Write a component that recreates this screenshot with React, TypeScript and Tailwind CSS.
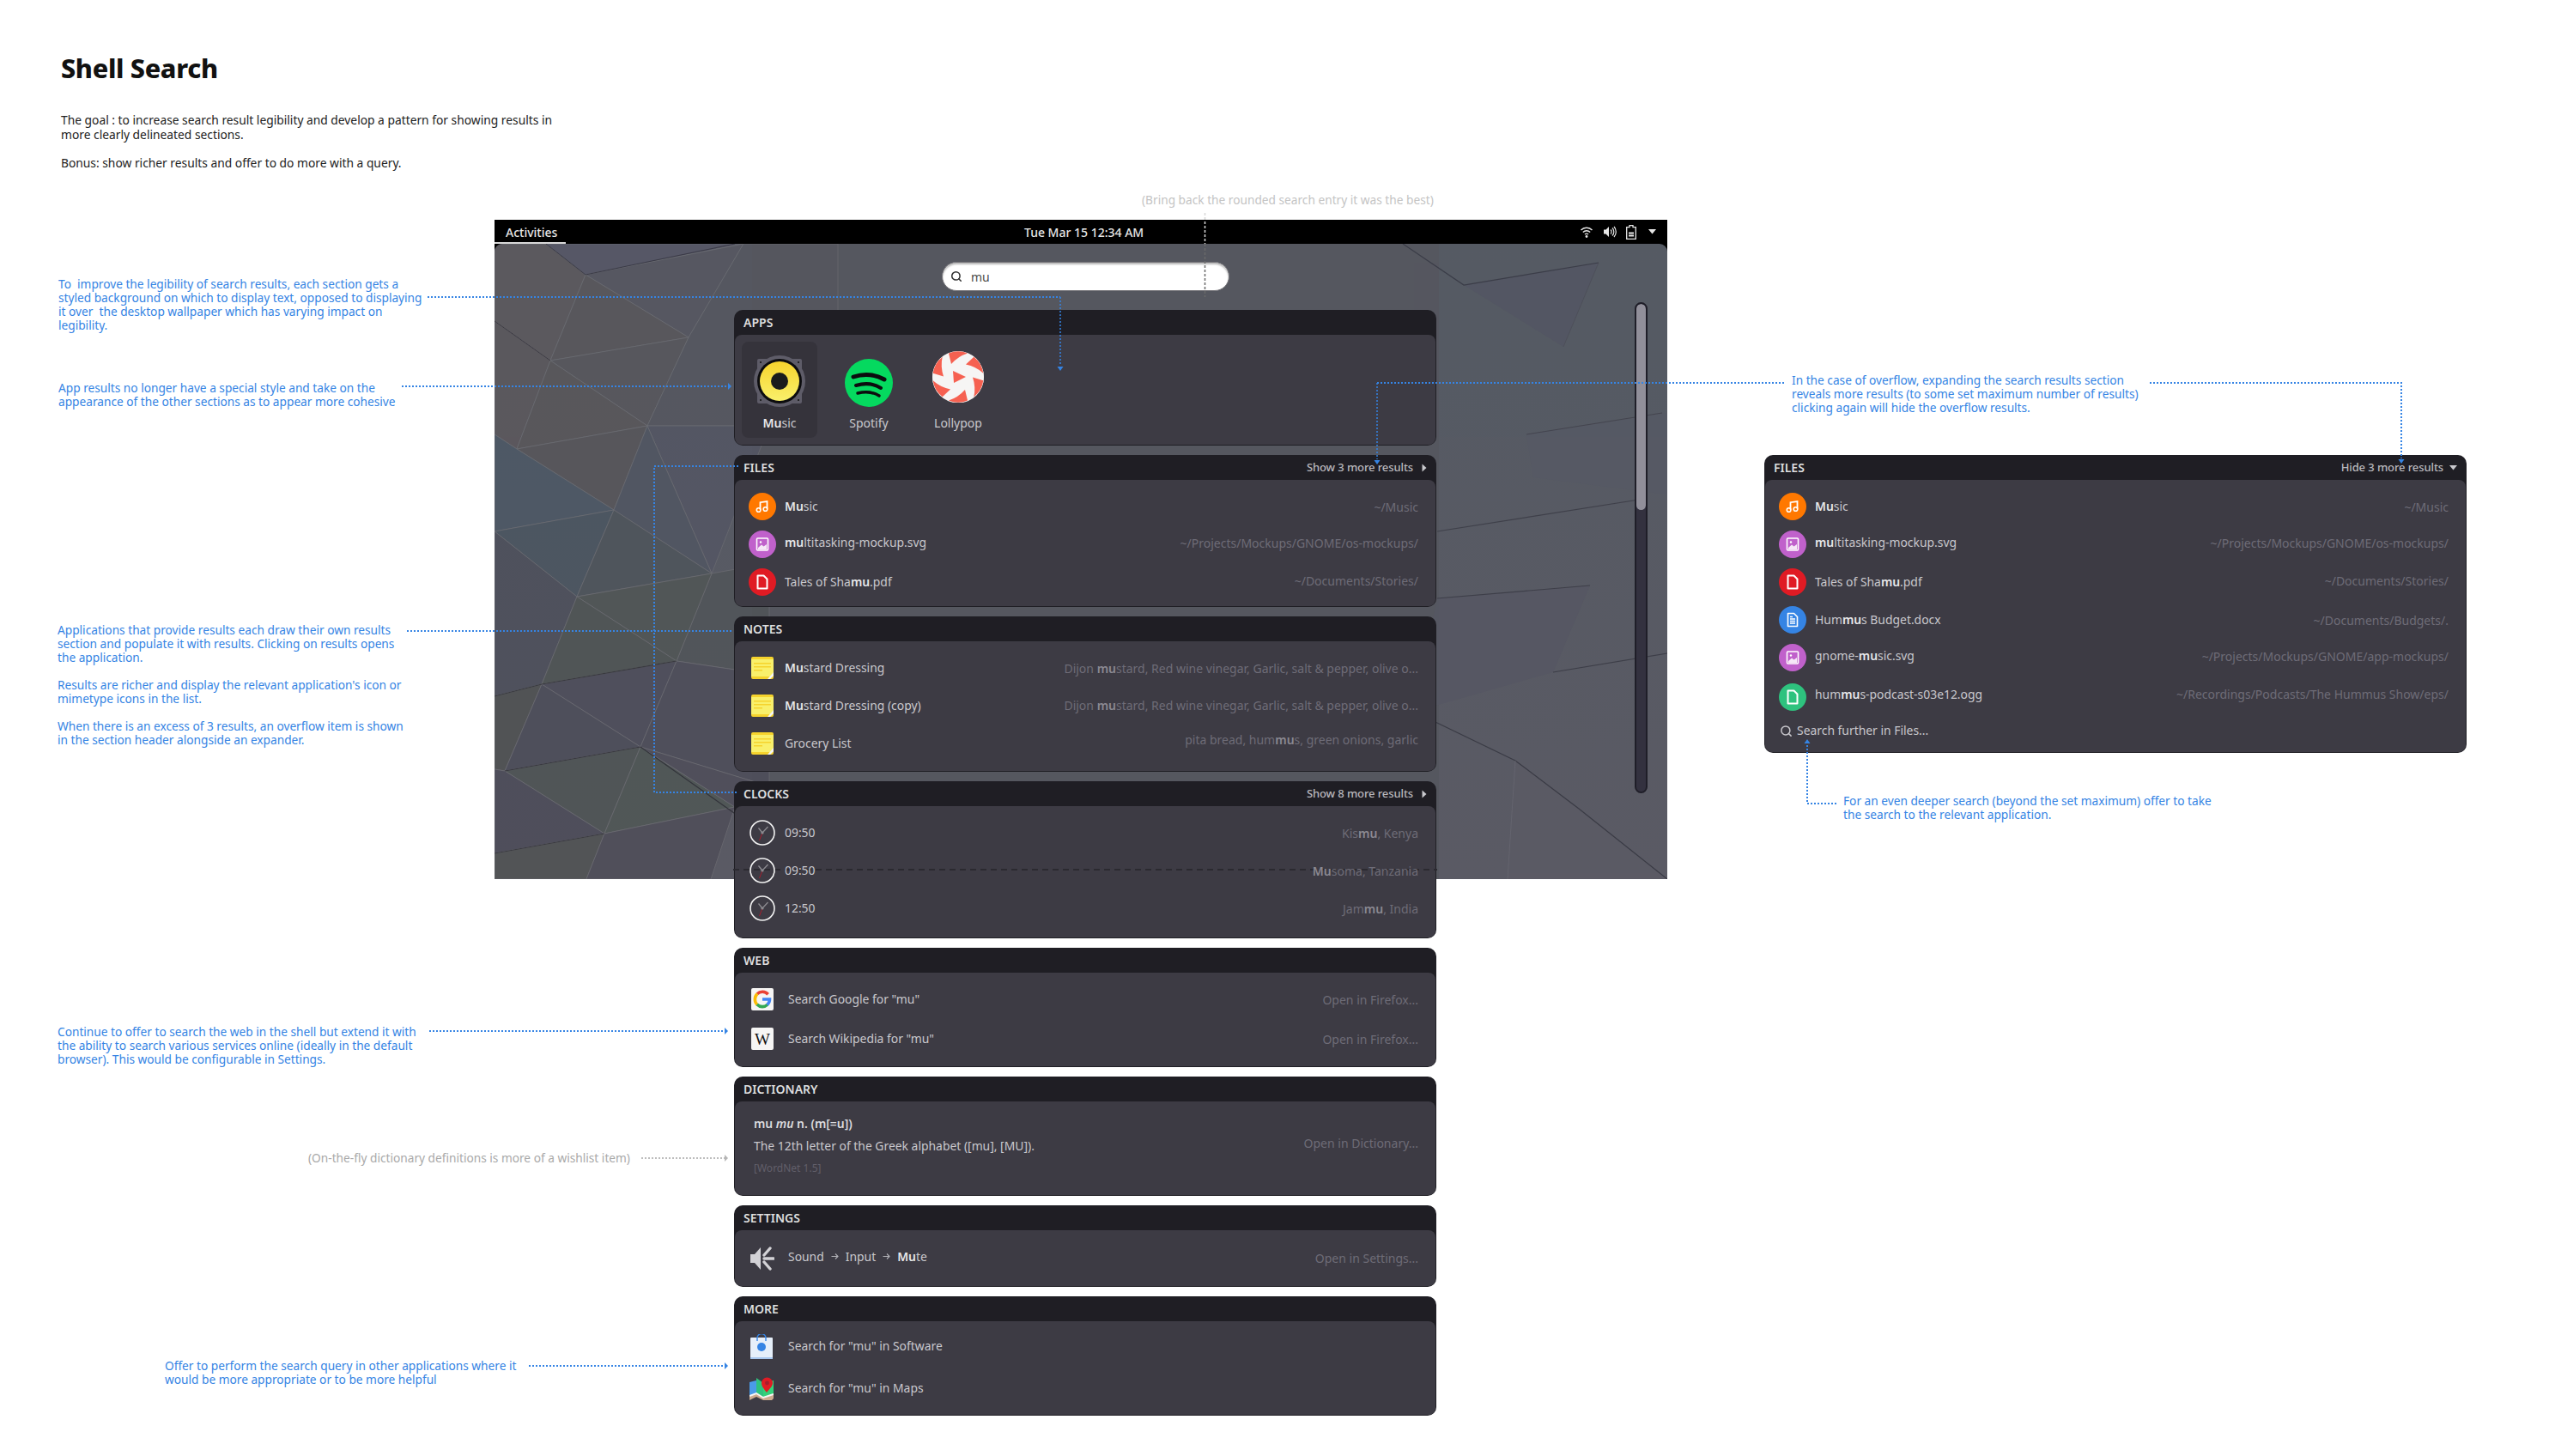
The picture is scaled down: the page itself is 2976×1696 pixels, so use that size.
import React from 'react';
import { Search } from 'lucide-react';

// **Mu**stard style highlights: the odd chunks are the matched part
function Hl({ t, strong }: { t: string; strong: string }) {
  const parts = t.split('*');
  return (
    <>
      {parts.map((p, i) =>
        i % 2 ? (
          <span key={i} className={`font-semibold ${strong}`}>
            {p}
          </span>
        ) : (
          <span key={i}>{p}</span>
        ),
      )}
    </>
  );
}

function Section({
  title,
  extra,
  bodyClass,
  children,
}: {
  title: string;
  extra?: React.ReactNode;
  bodyClass: string;
  children: React.ReactNode;
}) {
  return (
    <section className="rounded-[10px] bg-[#1f1e24] px-px pb-px">
      <div className="flex h-[29px] items-center pl-[10px] pr-[10px]">
        <span className="text-[14px] font-semibold text-[#dededf]">{title}</span>
        {extra}
      </div>
      <div className={`rounded-[8px] bg-[#3d3b44] ${bodyClass}`}>{children}</div>
    </section>
  );
}

function More({ label }: { label: string }) {
  return (
    <div className="ml-auto flex items-center">
      <span className="text-[13px] font-medium tracking-[-0.1px] text-[#b9b8bd]">{label}</span>
      <svg width="6" height="10" viewBox="0 0 6 10" className="ml-[10px]">
        <path d="M0.5 0.5 L5.5 5 L0.5 9.5Z" fill="#c8c8cc" />
      </svg>
    </div>
  );
}

function Row({
  icon,
  name,
  right,
  rowClass = 'h-[44px]',
  textClass = 'ml-[10px]',
  rightClass = '',
}: {
  icon: React.ReactNode;
  name: string;
  right?: string;
  rowClass?: string;
  textClass?: string;
  rightClass?: string;
}) {
  return (
    <div className={`flex items-center pl-[16px] pr-[20px] ${rowClass}`}>
      <div className="flex w-[32px] shrink-0 justify-center">{icon}</div>
      <span className={`whitespace-nowrap text-[13.900px] text-[#c9c8cd] ${textClass}`}>
        <Hl t={name} strong="text-[#e8e8ea]" />
      </span>
      {right && (
        <span className={`ml-auto whitespace-nowrap text-[14px] text-[#6e6c77] ${rightClass}`}>
          <Hl t={right} strong="text-[#8b8992]" />
        </span>
      )}
    </div>
  );
}

/* ---------- icons ---------- */

function MimeCircle({ bg, children }: { bg: string; children: React.ReactNode }) {
  return (
    <div className={`flex h-[32px] w-[32px] items-center justify-center rounded-full ${bg}`}>
      <svg width="18" height="18" viewBox="0 0 18 18" fill="none">
        {children}
      </svg>
    </div>
  );
}

const MusicMime = () => (
  <MimeCircle bg="bg-[#ff7800]">
    <path d="M6.500 12.500V4.200l8-1.200v8.500" stroke="#fff" strokeWidth="1.800" />
    <circle cx="4.600" cy="13" r="2.300" stroke="#fff" strokeWidth="1.600" />
    <circle cx="12.500" cy="12" r="2.300" stroke="#fff" strokeWidth="1.600" />
  </MimeCircle>
);
const ImageMime = () => (
  <MimeCircle bg="bg-[#c061cb]">
    <rect x="2.500" y="2" width="13" height="14" rx="1" stroke="#fff" strokeWidth="1.600" />
    <path d="M4 13l4-3.500 2.500 2 3.500-2.500V15H4z" fill="#fff" opacity="0.85" />
    <circle cx="7" cy="6.500" r="1.200" fill="#fff" />
  </MimeCircle>
);
const DocMime = ({ bg }: { bg: string }) => (
  <MimeCircle bg={bg}>
    <path d="M3.500 1.500h7l4 4v11h-11z" stroke="#fff" strokeWidth="2" strokeLinejoin="round" />
  </MimeCircle>
);
const TextMime = () => (
  <MimeCircle bg="bg-[#3584e4]">
    <path d="M3.500 1.500h7l4 4v11h-11z" stroke="#fff" strokeWidth="1.600" strokeLinejoin="round" />
    <path d="M6 8h6M6 10.500h6M6 13h6M6 5.500h3" stroke="#fff" strokeWidth="1.300" />
  </MimeCircle>
);

const NoteIcon = () => (
  <svg width="26" height="26" viewBox="0 0 26 26">
    <rect width="26" height="26" rx="2" fill="#f6d32d" />
    <rect y="3" width="26" height="20" fill="#f9f06b" />
    <path d="M3 7h20v1.600H3zM3 11h20v1.600H3zM3 15h10v1.600H3z" fill="#f6d32d" />
    <path d="M26 18v4l-4 4h-3z" fill="#f6f5f4" />
  </svg>
);

const ClockIcon = () => (
  <svg width="30" height="30" viewBox="0 0 30 30" fill="none">
    <circle cx="15" cy="15" r="14" stroke="#f2f2f2" strokeWidth="1.600" />
    <path d="M15 15L21.500 8M15 15L10.500 9.500" stroke="#8c8b90" strokeWidth="1.300" />
    <path d="M15 15L11.500 24" stroke="#a51d2d" strokeWidth="1" />
    <circle cx="15" cy="15" r="1.600" fill="#8c8b90" />
  </svg>
);

const GoogleIcon = () => (
  <div className="flex h-[26px] w-[26px] items-center justify-center rounded-[2px] bg-[#f6f5f4]">
    <svg width="22" height="22" viewBox="0 0 22 22" fill="none" strokeWidth="3.600">
      <path d="M17.600 5.200A8.600 8.600 0 0 0 5 4.800" stroke="#ea4335" />
      <path d="M5.200 4.700A8.600 8.600 0 0 0 4.900 17.200" stroke="#fbbc05" />
      <path d="M4.800 17A8.600 8.600 0 0 0 16.900 17.200" stroke="#34a853" />
      <path d="M16.600 17.400A8.600 8.600 0 0 0 19.500 11H11" stroke="#4285f4" />
    </svg>
  </div>
);

const WikiIcon = () => (
  <div className="flex h-[26px] w-[26px] items-center justify-center rounded-[2px] bg-[#f6f5f4] font-['Liberation_Serif',serif] text-[19px] leading-none text-[#111]">
    W
  </div>
);

const MuteIcon = () => (
  <svg width="28" height="32" viewBox="0 0 28 32" fill="#d3d2d6">
    <path d="M0 11h5l7-8v26l-7-8H0z" />
    <path
      d="M16 12L23 4M16 16h11M16 20l7 8"
      stroke="#d3d2d6"
      strokeWidth="3.400"
      strokeLinecap="round"
      fill="none"
    />
  </svg>
);

const CrumbArrow = () => (
  <svg width="9" height="9" viewBox="0 0 9 9" fill="none" stroke="#b0afb5" strokeWidth="1.100">
    <path d="M0.500 4.500H8M5 1.500l3 3-3 3" />
  </svg>
);

const BagIcon = () => (
  <svg width="26" height="29" viewBox="0 0 26 29" fill="none" className="-ml-[3px]">
    <rect y="4" width="26" height="25" rx="1" fill="#e6effa" />
    <rect y="27" width="26" height="2" fill="#a9c8ef" />
    <path d="M8 8V4.600a5 5 0 0 1 10 0V8" stroke="#3584e4" strokeWidth="1.400" />
    <circle cx="13" cy="15" r="5" fill="#3584e4" />
  </svg>
);

const MapsIcon = () => (
  <svg width="28" height="27" viewBox="0 0 28 27" className="-ml-[3px]">
    <path d="M0 6l8-2v18l-8 3z" fill="#4a9be8" />
    <path d="M8 1l8 6v18l-8-5z" fill="#2ec27e" />
    <path d="M16 7l12-3v20l-12 2z" fill="#33d17a" />
    <path d="M0 22l8-3 8 5 12-4v5l-2 2H16L8 23 0 27z" fill="#cdab8f" />
    <path d="M0 22l8-3 8 5 12-4" stroke="#f6f5f4" strokeWidth="2" fill="none" />
    <path d="M20 18c-3-4-6-7-6-11a6.500 6.500 0 0 1 13 0c0 4-4 7-7 11z" fill="#e01b24" />
    <circle cx="20.500" cy="7" r="2.400" fill="#a51d2d" />
  </svg>
);

const SpeakerIcon = () => (
  <svg width="60" height="60" viewBox="0 0 60 60">
    <defs>
      <linearGradient id="cone" x1="0" y1="0" x2="0" y2="1">
        <stop offset="0" stopColor="#f6d32d" />
        <stop offset="1" stopColor="#f9f06b" />
      </linearGradient>
    </defs>
    <rect x="4" y="4" width="52" height="52" rx="2" fill="#5e5c68" />
    <circle cx="30" cy="30" r="30" fill="#5e5c68" />
    <circle cx="30" cy="30" r="26" fill="#0c0c0e" />
    <circle cx="30" cy="30" r="23" fill="url(#cone)" />
    <circle cx="30" cy="30" r="10" fill="#1a1c1c" />
    <circle cx="8" cy="8" r="1" fill="#111" />
    <circle cx="52" cy="8" r="1" fill="#111" />
    <circle cx="8" cy="52" r="1" fill="#111" />
    <circle cx="52" cy="52" r="1" fill="#111" />
  </svg>
);

const SpotifyIcon = () => (
  <svg width="56" height="56" viewBox="0 0 56 56" fill="none" stroke="#0c0c0e" strokeLinecap="round">
    <circle cx="28" cy="28" r="28" fill="#05d95f" stroke="none" />
    <path d="M10 21c12-4 25-3 36 3" strokeWidth="5" />
    <path d="M13 31c10-3 21-2 29 3" strokeWidth="4" />
    <path d="M15 40c8-2 17-2 25 3" strokeWidth="3.400" />
  </svg>
);

const LollypopIcon = () => (
  <svg width="60" height="60" viewBox="0 0 60 60">
    <circle cx="30" cy="30.500" r="30" fill="#d5d0cc" />
    <circle cx="30" cy="30" r="30" fill="#f6f5f4" />
    {[0, 60, 120, 180, 240, 300].map((a) => (
      <path
        key={a}
        d="M19 2.500 A29.500 29.500 0 0 1 41 2.500 Q30 6 22 15 Z"
        fill="#f66151"
        transform={`rotate(${a} 30 30)`}
      />
    ))}
    <path d="M24 23 L39 30 L25 37 Z" fill="#f66151" />
  </svg>
);

function AppTile({
  label,
  icon,
  active,
  iconClass,
}: {
  label: string;
  icon: React.ReactNode;
  active?: boolean;
  iconClass: string;
}) {
  return (
    <div
      className={`flex h-[112px] w-[88px] flex-col items-center rounded-[8px] ${active ? 'bg-[#35333b]' : ''}`}
    >
      <div className={`flex h-[84px] items-center ${iconClass}`}>{icon}</div>
      <span className="text-[14px] text-[#c9c8cd]">
        <Hl t={label} strong="text-[#e8e8ea]" />
      </span>
    </div>
  );
}

/* ---------- wallpaper ---------- */

const LEFT_FACETS: [string, string][] = [
  ['0,28 60,28 106,64 65,164 0,118', '#5f595c'],
  ['60,28 290,28 106,64', '#575667'],
  ['106,64 290,28 226,137', '#585660'],
  ['106,64 226,137 65,164', '#5b5659'],
  ['0,118 65,164 26,267 0,250', '#5e575b'],
  ['65,164 226,137 178,240', '#59565a'],
  ['65,164 178,240 26,267', '#5a5658'],
  ['226,137 290,28 400,28 400,240 178,240', '#56565f'],
  ['178,240 320,240 253,412', '#535564'],
  ['26,267 178,240 139,338', '#585558'],
  ['178,240 253,412 139,338', '#4f5562'],
  ['0,250 26,267 139,338 0,363', '#4a5866'],
  ['0,363 139,338 96,439', '#485561'],
  ['139,338 253,412 96,439', '#4c5359'],
  ['253,412 320,400 320,530 212,514', '#4f5356'],
  ['96,439 253,412 212,514', '#4f5552'],
  ['0,363 96,439 55,541 0,555', '#4b4e5a'],
  ['96,439 212,514 55,541', '#4d5350'],
  ['55,541 212,514 170,614', '#4b4a59'],
  ['212,514 320,530 320,660 170,614', '#4b4a58'],
  ['0,555 55,541 12,642 0,640', '#4e504f'],
  ['55,541 170,614 12,642', '#4a4a58'],
  ['12,642 170,614 128,715', '#4c5451'],
  ['170,614 280,684 128,715', '#4d5652'],
  ['170,614 320,660 320,768 280,684', '#4c4a57'],
  ['0,640 12,642 128,715 0,738', '#4a4957'],
  ['0,738 128,715 107,768 0,768', '#4f5250'],
  ['128,715 280,684 252,768 107,768', '#4c4a56'],
];

const RIGHT_FACETS: [string, string][] = [
  ['1129,76 1286,50 1245,148', '#535663'],
  ['1202,250 1366,225 1366,320 1210,300', '#565965'],
  ['1098,441 1276,426 1233,527 1071,573', '#565763'],
  ['1189,630 1263,686 1366,768 1180,768', '#5b5a64'],
];

const CREASES: [string, number, string][] = [
  ['60,28 106,64 280,28', 1, '#3a3a46'],
  ['0,118 65,164', 1, '#3c3a42'],
  ['212,514 55,541 0,555', 1.200, '#393a3f'],
  ['170,614 12,642', 1.200, '#38383f'],
  ['170,614 320,720', 1.200, '#33343b'],
  ['0,738 128,715', 1.200, '#3a3a40'],
  ['1058,28 1129,76 1286,50', 1.200, '#3b3d48'],
  ['1286,50 1245,148', 0.7, '#4a4c56'],
  ['1098,363 1333,326', 1.200, '#3f404a'],
  ['1098,441 1276,426', 1.200, '#3e3f49'],
  ['1202,250 1360,225', 1, '#44454f'],
  ['1233,527 1366,505', 1.200, '#3d3e48'],
  ['1071,573 1189,630 1263,686 1366,768', 1.200, '#3a3b45'],
  ['1180,768 1189,630', 0.7, '#696973'],
];

function Wallpaper() {
  return (
    <svg width="1366" height="740" viewBox="0 28 1366 740" className="absolute left-0 top-0">
      <defs>
        <linearGradient id="wp" x1="0" y1="0" x2="0" y2="1">
          <stop offset="0" stopColor="#555a63" />
          <stop offset="1" stopColor="#5a5a64" />
        </linearGradient>
      </defs>
      <rect x="0" y="28" width="1366" height="740" fill="url(#wp)" />
      <rect x="300" y="28" width="800" height="740" fill="#55575f" />
      <g opacity="0.68" stroke="#77777b" strokeWidth="0.7">
        {LEFT_FACETS.map(([p, f]) => (
          <polygon key={p} points={p} fill={f} />
        ))}
      </g>
      <g opacity="0.8">
        {RIGHT_FACETS.map(([p, f]) => (
          <polygon key={p} points={p} fill={f} />
        ))}
      </g>
      {CREASES.map(([p, w, c]) => (
        <polyline key={p} points={p} fill="none" stroke={c} strokeWidth={w} />
      ))}
    </svg>
  );
}

/* ---------- connectors drawn over the mockup ---------- */

const BLUE = '#3584e4';

function Connectors() {
  return (
    <svg width="2976" height="1696" className="pointer-events-none absolute left-0 top-0" fill="none">
      <g stroke={BLUE} strokeWidth="2" strokeDasharray="2 2">
        <path d="M498 346H1235" />
        <path d="M468 450H848" />
        <path d="M474 735H854" />
        <path d="M860 543H762V923H860" />
        <path d="M500 1201H844" />
        <path d="M616 1591H844" />
        <path d="M1604 446H2078" />
        <path d="M2504 446H2797V534" />
        <path d="M2105 868V936H2139" />
      </g>
      <g stroke={BLUE} strokeWidth="1.500" strokeDasharray="2 2">
        <path d="M1235 346V426" />
        <path d="M1604 446V535" />
      </g>
      <g fill={BLUE}>
        <path d="M848 446l4 4-4 4z" />
        <path d="M844 1197l4 4-4 4z" />
        <path d="M844 1587l4 4-4 4z" />
        <path d="M1231.500 427h7l-3.500 5z" />
        <path d="M1600.500 536h7l-3.500 5z" />
        <path d="M2793.500 535h7l-3.500 5z" />
        <path d="M2101.500 866h7l-3.500 -5z" />
      </g>
      <path d="M747 1349H844" stroke="#a8a8a8" strokeWidth="1.500" strokeDasharray="2 2" />
      <path d="M844 1345l4 4-4 4z" fill="#b5b5b5" />
      <path d="M1403.500 248V284" stroke="#d8d8d8" strokeWidth="1.500" strokeDasharray="3 2" />
      <path d="M1403.500 284V346" stroke="#6a6a6a" strokeWidth="1.500" strokeDasharray="3 2" />
    </svg>
  );
}

function Note({ className, lines }: { className: string; lines: string[] }) {
  return (
    <div className={`absolute whitespace-pre text-[13.700px] leading-[16px] ${className}`}>
      {lines.map((l, i) => (
        <div key={i}>{l || '\u00a0'}</div>
      ))}
    </div>
  );
}

export default function App() {
  return (
    <div className="relative h-[1696px] w-[2976px] overflow-hidden bg-white font-['Noto_Sans',sans-serif]">
      {/* the desktop the results float on */}
      <div className="absolute left-[576px] top-[256px] flex h-[768px] w-[1366px] flex-col bg-black">
        <div className="relative flex h-[28px] items-center text-[14px] font-medium text-[#e6e6e6]">
          <span className="ml-[13px]">Activities</span>
          <div className="absolute bottom-0 left-0 h-[2px] w-[83px] bg-[#d8d8d8]" />
          <span className="absolute left-[617px] whitespace-nowrap">Tue Mar 15 12:34 AM</span>
          <div className="ml-auto mr-[13px] flex items-center gap-[11px]">
            <svg width="16" height="16" viewBox="0 0 16 16" fill="none" stroke="#e6e6e6" strokeWidth="1.400">
              <path d="M1.500 6a9 9 0 0 1 13 0M3.800 8.500a6 6 0 0 1 8.400 0M6 11a3 3 0 0 1 4 0" />
              <circle cx="8" cy="13.500" r="1.400" fill="#e6e6e6" stroke="none" />
            </svg>
            <svg width="16" height="16" viewBox="0 0 16 16" fill="none" stroke="#e6e6e6" strokeWidth="1.200">
              <path d="M1 5.500h2.500L7 2v12L3.500 10.500H1z" fill="#e6e6e6" stroke="none" />
              <path d="M9 5.500a3.500 3.500 0 0 1 0 5M11 3.500a6.500 6.500 0 0 1 0 9M13 2a9 9 0 0 1 0 12" />
            </svg>
            <svg width="12" height="17" viewBox="0 0 12 17" fill="none" stroke="#e6e6e6" strokeWidth="1.300">
              <path d="M4 .7h4v2h3.300v13.600H.7V2.700H4z" />
              <path d="M3 9.500h6M3 12.500h6" strokeWidth="1.800" />
            </svg>
            <svg width="9" height="6" viewBox="0 0 9 6" className="ml-[3px]">
              <path d="M0 0h9L4.500 5.500z" fill="#e6e6e6" />
            </svg>
          </div>
        </div>
        <div className="relative flex-1 overflow-hidden rounded-t-[9px]">
          <Wallpaper />
          <div className="relative ml-[521px] mt-[21px] flex h-[34px] w-[335px] items-center rounded-full border border-[#77767b] bg-white pl-[9px] text-[14px] text-[#4a4a4a] shadow-[inset_0_2px_2px_rgba(0,0,0,0.28)]">
            <Search size={14} strokeWidth={2.600} className="text-[#2e2e2e]" />
            <span className="ml-[10px]">mu</span>
          </div>
          {/* scrollbar sits on the wallpaper, right of the results */}
          <div className="absolute left-[1328px] top-[68px] h-[572px] w-[15px] overflow-hidden rounded-full border-2 border-[#1f1e28] bg-[#33313f]">
            <div className="h-[240px] rounded-full bg-[#918f9a]" />
          </div>
        </div>
      </div>

      {/* intro copy */}
      <div className="absolute left-[71px] top-[58px] text-[#111]">
        <h1 className="text-[30.500px] font-extrabold leading-[42px] tracking-[-0.3px]">Shell Search</h1>
        <p className="mt-[32px] whitespace-pre text-[13.800px] leading-[16.500px] text-[#222]">
          {'The goal : to increase search result legibility and develop a pattern for showing results in\nmore clearly delineated sections.\n\nBonus: show richer results and offer to do more with a query.'}
        </p>
      </div>

      {/* result sections */}
      <div className="relative flex gap-[382px] pl-[855px] pt-[361px] text-[13.900px]">
        <div className="flex w-[818px] flex-col gap-[11px]">
          <Section title="APPS" bodyClass="flex h-[128px] gap-[16px] pl-[8px] pt-[8px]">
            <AppTile active label="*Mu*sic" icon={<SpeakerIcon />} iconClass="pt-[8px]" />
            <AppTile label="Spotify" icon={<SpotifyIcon />} iconClass="pt-[12px]" />
            <AppTile label="Lollypop" icon={<LollypopIcon />} iconClass="pb-[2px]" />
          </Section>
          <Section title="FILES" extra={<More label="Show 3 more results" />} bodyClass="h-[147px] pt-[9px]">
            <Row icon={<MusicMime />} name="*Mu*sic" right="~/Music" />
            <Row
              icon={<ImageMime />}
              name="*mu*ltitasking-mockup.svg"
              right="~/Projects/Mockups/GNOME/os-mockups/"
              textClass="ml-[10px] pb-[3px]"
              rightClass="pb-[3px]"
            />
            <Row icon={<DocMime bg="bg-[#e01b24]" />} name="Tales of Sha*mu*.pdf" right="~/Documents/Stories/" rightClass="pb-[4px]" />
          </Section>
          <Section title="NOTES" bodyClass="h-[151px] pt-[9px]">
            <Row icon={<NoteIcon />} name="*Mu*stard Dressing" right="Dijon *mu*stard, Red wine vinegar, Garlic, salt & pepper, olive o..." />
            <Row icon={<NoteIcon />} name="*Mu*stard Dressing (copy)" right="Dijon *mu*stard, Red wine vinegar, Garlic, salt & pepper, olive o..." rightClass="pb-[2px]" />
            <Row icon={<NoteIcon />} name="Grocery List" right="pita bread, hum*mu*s, green onions, garlic" rightClass="pb-[9px]" />
          </Section>
          <Section title="CLOCKS" extra={<More label="Show 8 more results" />} bodyClass="relative h-[153px] pt-[9px]">
            {/* fold of the screen, runs under the row text */}
            <svg width="820" height="2" className="absolute -left-[2px] top-[73px]" fill="none">
              <path d="M0 1H820" stroke="#2b2a30" strokeWidth="2" strokeDasharray="7 5" />
            </svg>
            <Row rowClass="relative h-[44px]" icon={<ClockIcon />} name="09:50" right="Kis*mu*, Kenya" />
            <Row rowClass="relative h-[44px]" icon={<ClockIcon />} name="09:50" right="*Mu*soma, Tanzania" />
            <Row rowClass="relative h-[44px]" icon={<ClockIcon />} name="12:50" right="Jam*mu*, India" />
          </Section>
          <Section title="WEB" bodyClass="h-[109px] pt-[8px]">
            <Row rowClass="h-[46px]" textClass="ml-[14px]" icon={<GoogleIcon />} name={'Search Google for "mu"'} right="Open in Firefox..." />
            <Row rowClass="h-[46px]" textClass="ml-[14px]" icon={<WikiIcon />} name={'Search Wikipedia for "mu"'} right="Open in Firefox..." />
          </Section>
          <Section title="DICTIONARY" bodyClass="flex h-[109px] items-center pl-[22px] pr-[20px]">
            <div className="self-start pt-[13px] leading-[26px]">
              <div className="font-semibold text-[#dcdbdf]">
                mu <i>mu</i> n. (m[=u])
              </div>
              <div className="text-[#c9c8cd]">The 12th letter of the Greek alphabet ([mu], [MU]).</div>
              <div className="text-[12px] text-[#625f6a]">[WordNet 1.5]</div>
            </div>
            <span className="ml-auto pb-[13px] text-[14px] text-[#6e6c77]">Open in Dictionary...</span>
          </Section>
          <Section title="SETTINGS" bodyClass="flex h-[65px] items-center pl-[16px] pr-[20px]">
            <div className="flex w-[32px] shrink-0 justify-center">
              <MuteIcon />
            </div>
            <span className="ml-[14px] flex items-center gap-[8px] pb-[3px] text-[#c9c8cd]">
              <span>Sound</span>
              <CrumbArrow />
              <span>Input</span>
              <CrumbArrow />
              <span>
                <span className="font-semibold text-[#e8e8ea]">Mu</span>te
              </span>
            </span>
            <span className="ml-auto text-[14px] text-[#6e6c77]">Open in Settings...</span>
          </Section>
          <Section title="MORE" bodyClass="h-[109px] pt-[3px]">
            <Row rowClass="h-[50px] pt-[2px]" textClass="ml-[14px]" icon={<BagIcon />} name={'Search for "mu" in Software'} />
            <Row rowClass="h-[50px]" textClass="ml-[14px]" icon={<MapsIcon />} name={'Search for "mu" in Maps'} />
          </Section>
        </div>

        {/* expanded state of the files section */}
        <div className="mt-[169px] w-[818px]">
          <Section
            title="FILES"
            extra={
              <div className="ml-auto flex items-center">
                <span className="text-[13px] font-medium tracking-[-0.1px] text-[#b9b8bd]">Hide 3 more results</span>
                <svg width="9" height="6" viewBox="0 0 9 6" className="ml-[7px]">
                  <path d="M0 0h9L4.500 5.500z" fill="#c8c8cc" />
                </svg>
              </div>
            }
            bodyClass="h-[317px] pt-[9px]"
          >
            <Row icon={<MusicMime />} name="*Mu*sic" right="~/Music" />
            <Row
              icon={<ImageMime />}
              name="*mu*ltitasking-mockup.svg"
              right="~/Projects/Mockups/GNOME/os-mockups/"
              textClass="ml-[10px] pb-[3px]"
              rightClass="pb-[3px]"
            />
            <Row icon={<DocMime bg="bg-[#e01b24]" />} name="Tales of Sha*mu*.pdf" right="~/Documents/Stories/" rightClass="pb-[4px]" />
            <Row icon={<TextMime />} name="Hum*mu*s Budget.docx" right="~/Documents/Budgets/." />
            <Row
              icon={<ImageMime />}
              name="gnome-*mu*sic.svg"
              right="~/Projects/Mockups/GNOME/app-mockups/"
              textClass="ml-[10px] pb-[4px]"
              rightClass="pb-[4px]"
            />
            <Row
              rowClass="mt-[2px] h-[44px]"
              icon={<DocMime bg="bg-[#2ec27e]" />}
              name="hum*mu*s-podcast-s03e12.ogg"
              right="~/Recordings/Podcasts/The Hummus Show/eps/"
              textClass="ml-[10px] pb-[5px]"
              rightClass="pb-[8px]"
            />
            <div className="flex items-center pl-[17px] pt-[7px] text-[#c9c8cd]">
              <Search size={15} strokeWidth={2.400} className="text-[#c9c8cd]" />
              <span className="ml-[5px]">Search further in Files...</span>
            </div>
          </Section>
        </div>
      </div>

      <Connectors />

      {/* annotations */}
      <Note
        className="left-[68px] top-[323px] text-[#3584e4]"
        lines={[
          'To  improve the legibility of search results, each section gets a',
          'styled background on which to display text, opposed to displaying',
          'it over  the desktop wallpaper which has varying impact on',
          'legibility.',
        ]}
      />
      <Note
        className="left-[68px] top-[444px] text-[#3584e4]"
        lines={[
          'App results no longer have a special style and take on the',
          'appearance of the other sections as to appear more cohesive',
        ]}
      />
      <Note
        className="left-[67px] top-[726px] text-[#3584e4]"
        lines={[
          'Applications that provide results each draw their own results',
          'section and populate it with results. Clicking on results opens',
          'the application.',
          '',
          "Results are richer and display the relevant application's icon or",
          'mimetype icons in the list.',
          '',
          'When there is an excess of 3 results, an overflow item is shown',
          'in the section header alongside an expander.',
        ]}
      />
      <Note
        className="left-[67px] top-[1194px] text-[#3584e4]"
        lines={[
          'Continue to offer to search the web in the shell but extend it with',
          'the ability to search various services online (ideally in the default',
          'browser). This would be configurable in Settings.',
        ]}
      />
      <Note
        className="left-[359px] top-[1341px] text-[#a9a9a9]"
        lines={['(On-the-fly dictionary definitions is more of a wishlist item)']}
      />
      <Note
        className="left-[192px] top-[1583px] text-[#3584e4]"
        lines={[
          'Offer to perform the search query in other applications where it',
          'would be more appropriate or to be more helpful',
        ]}
      />
      <Note
        className="left-[1330px] top-[225px] text-[#c4c4c4]"
        lines={['(Bring back the rounded search entry it was the best)']}
      />
      <Note
        className="left-[2087px] top-[435px] text-[#3584e4]"
        lines={[
          'In the case of overflow, expanding the search results section',
          'reveals more results (to some set maximum number of results)',
          'clicking again will hide the overflow results.',
        ]}
      />
      <Note
        className="left-[2147px] top-[925px] text-[#3584e4]"
        lines={[
          'For an even deeper search (beyond the set maximum) offer to take',
          'the search to the relevant application.',
        ]}
      />
    </div>
  );
}
